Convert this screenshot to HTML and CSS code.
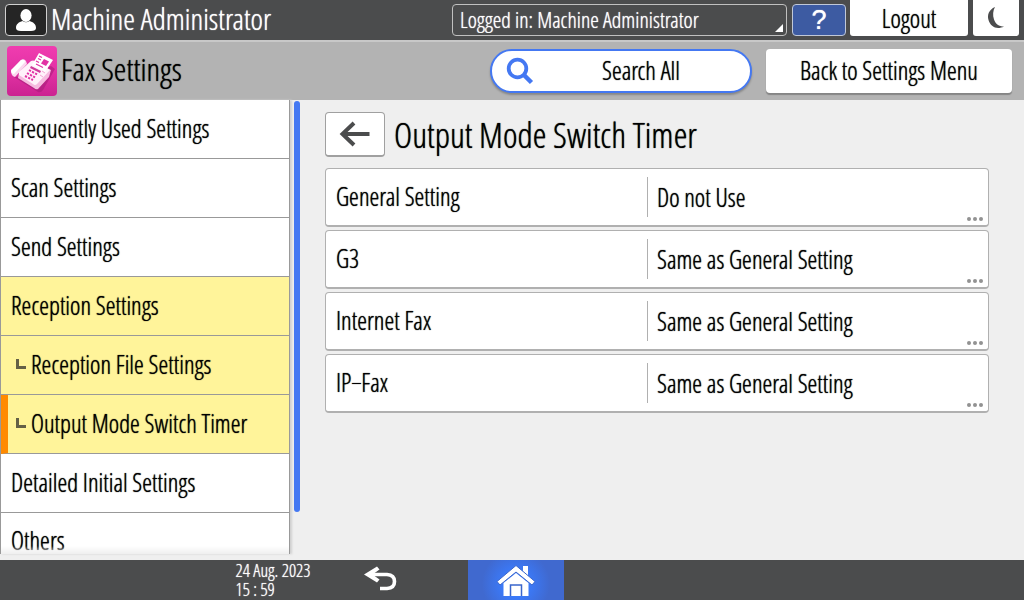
FILE: index.html
```html
<!DOCTYPE html>
<html lang="en">
<head>
<meta charset="utf-8">
<title>Fax Settings</title>
<link rel="stylesheet" href="styles.css">
</head>
<body>
<header class="system-bar">
  <span class="user-badge">
    <svg width="22" height="24" viewBox="0 0 22 24" aria-hidden="true"><ellipse cx="11" cy="7.5" rx="5.6" ry="6.5" fill="#fff"/><path d="M1 20C1 16 4 14 7.500 13Q11 15.500 14.500 13C18 14 21 16 21 20Q21 23 16 23H6Q1 23 1 20Z" fill="#fff"/></svg>
  </span>
  <span class="user-name">Machine Administrator</span>
  <div class="login">
    <select class="login-select" aria-label="Logged in user"><option>Logged in: Machine Administrator</option></select>
    <svg class="login-corner" width="8" height="8" viewBox="0 0 8 8" aria-hidden="true"><path d="M8 0V8H0Z" fill="#fff"/></svg>
  </div>
  <button class="help" type="button">?</button>
  <button class="logout" type="button">Logout</button>
  <button class="sleep" type="button" aria-label="Sleep">
    <svg width="18" height="24" viewBox="0 0 18 24" aria-hidden="true"><path d="M8 1C2 3.500 0 9 1.500 14C3.500 21 10 24 17 20.500C12 20.500 8.500 18 7 13.500C5.500 9 6 4.500 8 1Z" fill="#4b4c4d"/></svg>
  </button>
</header>

<div class="title-bar">
  <svg class="fax-icon" width="50" height="50" viewBox="0 0 50 50" aria-hidden="true">
    <defs><linearGradient id="pink" x1="0" y1="0" x2="0" y2="1"><stop offset="0" stop-color="#f03cb0"/><stop offset=".5" stop-color="#e232a4"/><stop offset="1" stop-color="#cb2391"/></linearGradient></defs>
    <rect width="50" height="50" rx="4" fill="url(#pink)"/>
    <path d="M7 31L31 46Q34 47 36 44L48 23L44 20L20 30Z" fill="#a81c7a" opacity=".6"/>
    <path d="M4 25L14 14Q17 12 19 15L20 18L8 31Q4 30 4 25Z" fill="#fbd9ef"/>
    <path d="M4 24L14 14Q18 13 18 16L7 28Q4 28 4 24Z" fill="#fff"/>
    <path d="M12 27L25 15L44 24L42 31L31 43Q29 44 27 42L11 32Z" fill="#f6badf"/>
    <path d="M12 26L24 15Q26 14 28 15L43 24L30 38Q28 40 26 38L12 29Z" fill="#fff2fa"/>
    <path d="M32 7L46 14L38 26L25 19Z" fill="#fff"/>
    <path d="M37 13L42 15.500L39 20L34 17.500Z" fill="#e232a4"/>
    <path d="M32 10L35 11.500M31 12.500L34 14M29 15L32 16.500M29 18L36 21.500" stroke="#e232a4" stroke-width="1.200"/>
    <path d="M24 20L34 25L33 27L23 22Z" fill="#cf3a9a"/>
    <path d="M22 24L31 29M20 27L29 32M18 30L26 34" stroke="#e232a4" stroke-width="2" stroke-dasharray="2.200 1.300"/>
    <path d="M35 25L38 27M33 29L36 31" stroke="#f6a5d7" stroke-width="1"/>
  </svg>
  <h1 class="app-title">Fax Settings</h1>
  <button class="search" type="button">
    <svg width="28" height="28" viewBox="0 0 28 28" aria-hidden="true"><circle cx="11.500" cy="11.500" r="8.800" fill="none" stroke="#4478f2" stroke-width="3.800"/><path d="M18 18L25.500 25.500" stroke="#4478f2" stroke-width="4.500"/></svg>
    <span class="search-label">Search All</span>
  </button>
  <button class="to-menu" type="button">Back to Settings Menu</button>
</div>

<div class="workspace">
  <nav class="sidebar">
    <a class="nav-item" href="#">Frequently Used Settings</a>
    <a class="nav-item" href="#">Scan Settings</a>
    <a class="nav-item" href="#">Send Settings</a>
    <a class="nav-item open" href="#">Reception Settings</a>
    <a class="nav-item open child" href="#"><i class="branch"></i>Reception File Settings</a>
    <a class="nav-item open child current" href="#"><i class="branch"></i>Output Mode Switch Timer</a>
    <a class="nav-item" href="#">Detailed Initial Settings</a>
    <a class="nav-item" href="#">Others</a>
  </nav>
  <div class="scroll-track"><div class="scroll-thumb"></div></div>
  <main class="panel">
    <div class="panel-head">
      <button class="back" type="button" aria-label="Back">
        <svg width="32" height="26" viewBox="0 0 32 26" aria-hidden="true"><path d="M30.500 13H4M15 2L3.500 13L15 24" fill="none" stroke="#4b4c4d" stroke-width="4"/></svg>
      </button>
      <h2 class="panel-title">Output Mode Switch Timer</h2>
    </div>
    <button class="setting" type="button"><span class="setting-name">General Setting</span><span class="setting-value">Do not Use</span><span class="dots"><i></i><i></i><i></i></span></button>
    <button class="setting" type="button"><span class="setting-name">G3</span><span class="setting-value">Same as General Setting</span><span class="dots"><i></i><i></i><i></i></span></button>
    <button class="setting" type="button"><span class="setting-name">Internet Fax</span><span class="setting-value">Same as General Setting</span><span class="dots"><i></i><i></i><i></i></span></button>
    <button class="setting" type="button"><span class="setting-name">IP−Fax</span><span class="setting-value">Same as General Setting</span><span class="dots"><i></i><i></i><i></i></span></button>
  </main>
</div>

<footer class="footer">
  <div class="clock"><div>24 Aug. 2023</div><div>15 : 59</div></div>
  <button class="undo" type="button" aria-label="Return">
    <svg width="34" height="28" viewBox="0 0 34 28" aria-hidden="true"><path d="M5 8.500H23Q30.500 9 30.500 15.500Q30.500 22 23 22.500H16" fill="none" stroke="#fff" stroke-width="3.600"/><path d="M0 8.500L13 .5L15.500 3.500L8.500 8.500L15.500 13.500L13 16.500Z" fill="#fff"/></svg>
  </button>
  <button class="home" type="button" aria-label="Home">
    <svg width="40" height="34" viewBox="0 0 40 34" aria-hidden="true"><path d="M27 2H32V14L27 9Z" fill="#fff"/><path d="M20 9L32.500 19V32H7.500V19Z" fill="#fff"/><path d="M14.500 32V21H25.500V32" fill="#fff" stroke="#3a66cc" stroke-width="1.500"/><path d="M1 17.500L20 1.500L39 17.500L36 21L20 8L4 21Z" fill="#fff" stroke="#3a66cc" stroke-width="1"/></svg>
  </button>
</footer>
</body>
</html>
```
FILE: styles.css
```css
* { box-sizing: border-box; }

body {
  margin: 0;
  height: 100vh;
  display: flex;
  flex-direction: column;
  background: #efefef;
  color: #000;
  font-family: "Open Sans Condensed Light", "Open Sans Condensed", "Roboto Condensed", sans-serif;
  font-weight: 300;
  font-size: 25px;
  line-height: 28px;
  text-shadow: 0 0 1px;
}

button, select {
  margin: 0;
  padding: 0;
  border: 0;
  font: inherit;
  color: inherit;
  background: #fff;
  text-shadow: inherit;
}

svg { display: block; flex: none; }
h1, h2 { margin: 0; font-weight: inherit; white-space: nowrap; }

.system-bar {
  display: flex;
  align-items: flex-start;
  height: 42px;
  padding: 0 5px;
  background: #4b4c4d;
  border-bottom: 2px solid #c8c8c8;
}
.user-badge {
  display: flex;
  align-items: center;
  justify-content: center;
  width: 42px;
  height: 32px;
  margin-top: 4px;
  border: 1px solid #d0d0d0;
  border-radius: 4px;
  background: #252525;
}
.user-name {
  flex: 1;
  margin-left: 4px;
  color: #fff;
  font-size: 30px;
  line-height: 38px;
  white-space: nowrap;
}
.login { position: relative; width: 335px; margin: 4px 5px 0 0; }
.login-select {
  display: block;
  appearance: none;
  width: 100%;
  height: 32px;
  padding: 0 7px 2px;
  border: 1px solid #c0c0c0;
  border-radius: 4px;
  background: #4b4c4d;
  color: #fff;
  font-size: 22px;
}
.login-corner { position: absolute; right: 4px; bottom: 4px; }
.help {
  width: 54px;
  height: 32px;
  margin: 4px 4px 0 0;
  border: 1px solid #c0c8d8;
  border-radius: 4px;
  background: #3d5ba2;
  color: #fff;
  font-family: "Liberation Sans", sans-serif;
  font-size: 27px;
  line-height: 28px;
}
.logout { width: 118px; height: 36px; margin-right: 5px; border-radius: 0 0 3px 3px; }
.sleep {
  display: flex;
  justify-content: center;
  width: 46px;
  height: 36px;
  padding-top: 6px;
  border-radius: 0 0 3px 3px;
}

.title-bar {
  display: flex;
  align-items: center;
  height: 58px;
  padding: 0 12px 0 7px;
  background: #b3b3b3;
}
.app-title { flex: 1; margin-left: 4px; padding-bottom: 4px; font-size: 32px; line-height: 36px; }
.search {
  display: flex;
  align-items: center;
  width: 262px;
  height: 44px;
  margin-right: 14px;
  padding: 0 14px;
  border: 2px solid #4478f2;
  border-radius: 22px;
  box-shadow: 0 2px 2px #888;
}
.search-label { flex: 1; padding: 0 0 2px 12px; text-align: center; }
.to-menu { width: 246px; height: 44px; padding-bottom: 2px; border-radius: 4px; box-shadow: 0 2px 1px #858585; }

.workspace { flex: 1; display: flex; min-height: 0; }
.sidebar {
  position: relative;
  width: 290px;
  margin-bottom: 6px;
  overflow: hidden;
  border: solid #999;
  border-width: 0 1px;
  background: #fff;
  box-shadow: 2px 0 2px #d0d0d0;
}
.sidebar::after {
  content: "";
  position: absolute;
  inset: auto 0 0;
  height: 8px;
  background: linear-gradient(rgba(239, 239, 239, 0), #efefef);
}
.nav-item {
  display: flex;
  align-items: center;
  height: 59px;
  padding: 0 0 2px 10px;
  border-bottom: 1px solid #999;
  color: #000;
  text-decoration: none;
  white-space: nowrap;
}
.nav-item:last-of-type { height: 56px; border-bottom: 0; }
.open { background: #fff49a; }
.child { padding-left: 15px; }
.current { padding-left: 8px; border-left: 7px solid #ff8a00; border-bottom-color: #999; }
.branch {
  width: 10px;
  height: 10px;
  margin-right: 5px;
  border: solid #646046;
  border-width: 0 0 3px 3px;
}
.scroll-track { width: 14px; padding: 1px 4px 48px; }
.scroll-thumb { width: 6px; height: 100%; border-radius: 3px; background: #4478f2; }

.panel {
  flex: 1;
  display: flex;
  flex-direction: column;
  gap: 3px;
  padding: 12px 35px 0 21px;
}
.panel-head { display: flex; align-items: center; margin-bottom: 8px; }
.back {
  display: flex;
  align-items: center;
  justify-content: center;
  width: 60px;
  height: 45px;
  border: 1px solid #a0a0a0;
  border-bottom-width: 2px;
  border-radius: 4px;
}
.panel-title { margin-left: 9px; font-size: 35px; line-height: 45px; }
.setting {
  position: relative;
  display: grid;
  grid-template-columns: 321fr 341fr;
  align-items: center;
  height: 59px;
  border: 1px solid #b0b0b0;
  border-bottom-width: 2px;
  border-radius: 4px;
  text-align: left;
}
.setting-name { padding: 0 0 2px 10px; }
.setting-value { padding-left: 9px; border-left: 1px solid #b0b0b0; line-height: 40px; }
.dots { position: absolute; right: 5px; bottom: 4px; display: flex; gap: 2px; }
.dots i { width: 4px; height: 4px; border-radius: 2px; background: #929292; }

.footer {
  display: flex;
  height: 40px;
  padding-left: 23%;
  background: #4b4c4d;
  color: #fff;
}
.clock { width: 128px; padding-top: 1px; font-size: 18px; line-height: 19px; white-space: nowrap; }
.undo { width: 104px; padding-top: 6px; background: none; }
.undo, .home { display: flex; align-items: flex-start; }
.home {
  justify-content: center;
  width: 96px;
  padding-top: 4px;
  background: radial-gradient(circle at 50% 60%, #3a7cff 10px, #4069cf 34px);
}
```
